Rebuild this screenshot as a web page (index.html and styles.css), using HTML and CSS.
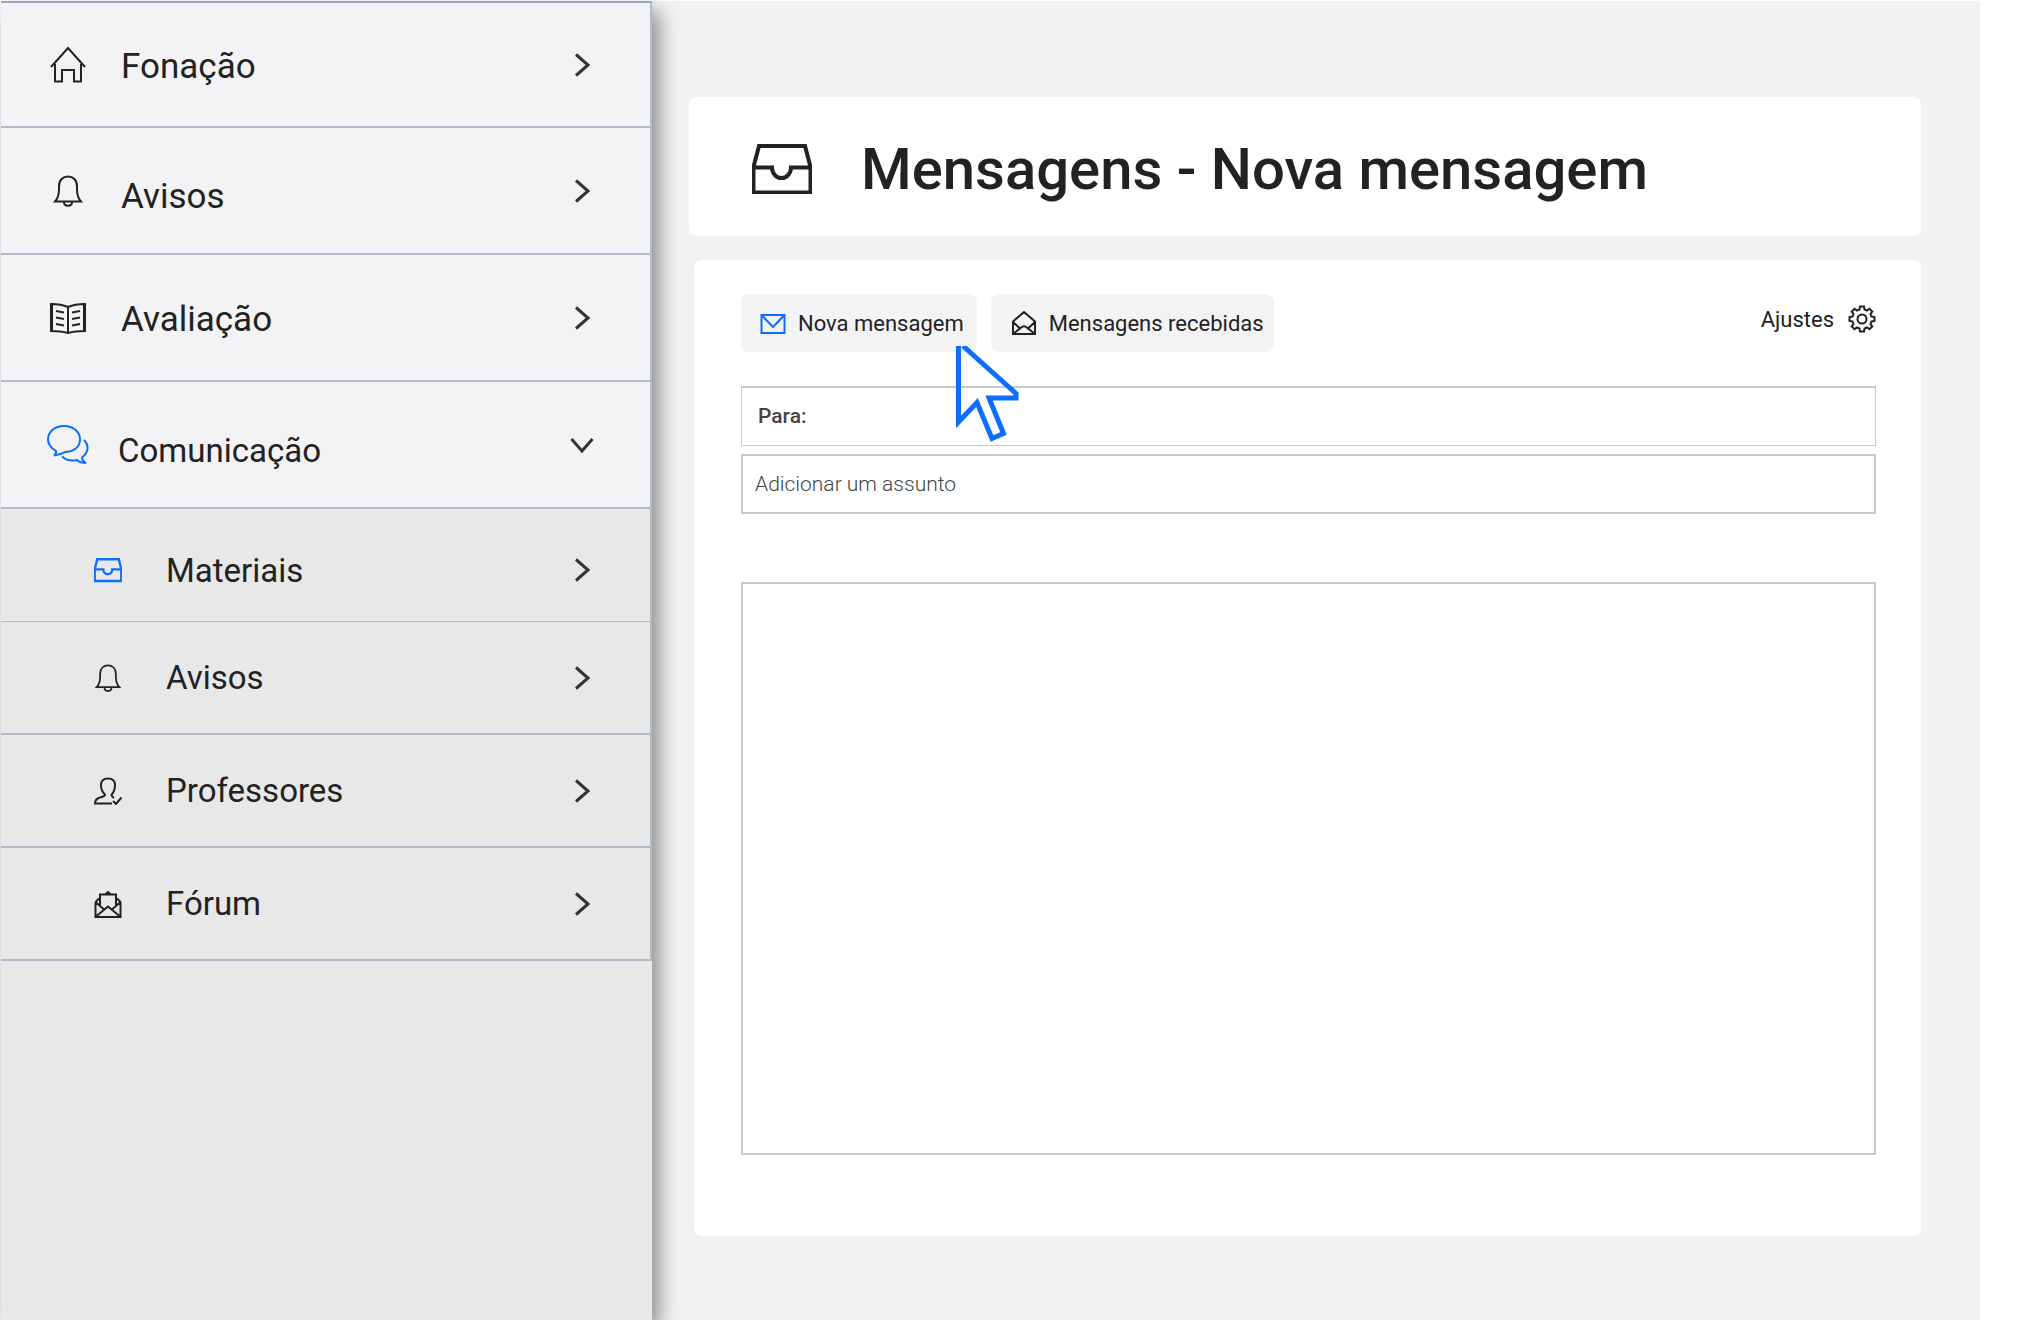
FILE: index.html
```html
<!DOCTYPE html>
<html lang="pt-BR">
<head>
<meta charset="utf-8">
<title>Mensagens - Nova mensagem</title>
<link rel="stylesheet" href="styles.css">
</head>
<body>
<svg width="0" height="0" class="sprite" aria-hidden="true">
  <symbol id="chevron" viewBox="0 0 24 24"><path d="M6 1.500L18 12L6 22.500"/></symbol>
  <symbol id="bell" viewBox="0 0 28 32"><path d="M1 26.500C4 23 5 20 5 15V11C5 5 9 1.500 14 1.500S23 5 23 11V15C23 20 24 23 27 26.500Z"/><path d="M10 27C10 32 18 32 18 27"/></symbol>
  <symbol id="tray" viewBox="0 0 60 50"><path d="M7 2H53L58.500 23V48.500H1.500V23Z"/><path d="M1.500 23.500H20C20 29 24 34 29.500 34S39 29 39 23.500H58.500"/></symbol>
</svg>

<nav class="sidebar" aria-label="Menu principal">
  <a class="nav-row" href="#fonacao">
    <svg class="nav-icon" viewBox="0 0 44 44"><path d="M5 24L22 5L39 24M9 21V38.500H16V27H28V38.500H35V21"/></svg>
    <span class="nav-text">Fonação</span>
    <svg class="chevron"><use href="#chevron"/></svg>
  </a>
  <a class="nav-row nav-row--low" href="#avisos">
    <svg class="nav-icon nav-icon--bell"><use href="#bell"/></svg>
    <span class="nav-text">Avisos</span>
    <svg class="chevron"><use href="#chevron"/></svg>
  </a>
  <a class="nav-row" href="#avaliacao">
    <svg class="nav-icon" viewBox="0 0 44 44"><path d="M5 8Q15 8 22 11Q29 8 39 8V35Q29 35 22 37Q15 35 5 35ZM22 11V37M10 15L18 16.500M10 21.500L18 23M10 28L18 29.500M34 15L26 16.500M34 21.500L26 23M34 28L26 29.500"/><path d="M6 8V35M38 8V35"/></svg>
    <span class="nav-text">Avaliação</span>
    <svg class="chevron"><use href="#chevron"/></svg>
  </a>
  <button class="nav-row nav-row--low nav-row--open" type="button" aria-expanded="true" aria-controls="submenu">
    <svg class="nav-icon nav-icon--blue" viewBox="0 0 44 44"><path d="M10 28C5 25 2 21 2 16.500C2 8.500 9 3 18 3S34 8.500 34 16.500S27 29 19 29Q15 31.500 8 32.500Q10.500 31 10 28Z"/><path d="M38 17C43 22 43 29 36 34.500Q36 38 40 40Q34 40 31 37C25 38.500 20 37 16 33.500"/></svg>
    <span class="nav-text">Comunicação</span>
    <svg class="chevron chevron--down"><use href="#chevron"/></svg>
  </button>
  <div class="submenu" id="submenu">
    <a class="sub-row sub-row--low" href="#materiais">
      <svg class="sub-icon nav-icon--blue sub-icon--tray"><use href="#tray"/></svg>
      <span>Materiais</span>
      <svg class="chevron"><use href="#chevron"/></svg>
    </a>
    <a class="sub-row" href="#sub-avisos">
      <svg class="sub-icon"><use href="#bell"/></svg>
      <span>Avisos</span>
      <svg class="chevron"><use href="#chevron"/></svg>
    </a>
    <a class="sub-row" href="#professores">
      <svg class="sub-icon" viewBox="0 0 28 28"><path d="M18 26.500H1Q1 22 6 20.500Q11 19.500 11 17.500C8 15 7 12 7 8C7 3.500 10 1.500 14 1.500S21 3.500 21 8C21 12 20 15 17.500 18Q18 20 20 21M19 24L22 27L27.500 20.500"/></svg>
      <span>Professores</span>
      <svg class="chevron"><use href="#chevron"/></svg>
    </a>
    <a class="sub-row" href="#forum">
      <svg class="sub-icon" viewBox="0 0 28 28"><path d="M1.500 12V27H26.500V12L22 7.500M1.500 12L6 7.500M6 15.500V4.500H22V15.500M11 4.500L14 2L17 4.500M1.500 12L10 19.500M26.500 12L18 19.500M2 26.500L14 16.500L26 26.500"/></svg>
      <span>Fórum</span>
      <svg class="chevron"><use href="#chevron"/></svg>
    </a>
  </div>
</nav>

<main class="content">
  <header class="title-card">
    <svg class="title-icon"><use href="#tray"/></svg>
    <h1>Mensagens - Nova mensagem</h1>
  </header>

  <form class="composer">
    <div class="toolbar">
      <button class="tab" type="button">
        <svg class="tab-icon nav-icon--blue" viewBox="0 0 26 24"><path d="M1.500 4H24.500V22H1.500ZM2 4.500L13 16L24 4.500"/></svg>
        Nova mensagem
        <svg class="pointer" viewBox="0 0 66 98" aria-hidden="true"><path d="M2.500 0V76L21 56.500L36 92.500L47.500 87.500L33 52H60V47.500L7 0"/></svg>
      </button>
      <button class="tab tab--inbox" type="button">
        <svg class="tab-icon" viewBox="0 0 26 24"><path d="M2 10.500L13 1L24 10.500V23H2ZM2 11L9 17.500M24 11L17 17.500M2.500 22.500L9 17.500Q13 13 17 17.500L23.500 22.500"/></svg>
        Mensagens recebidas
      </button>
      <button class="settings" type="button">
        Ajustes
        <svg class="gear" viewBox="0 0 28 28"><path d="M11.500 4.500L12 1.500H16L16.500 4.500L19 5.500L21.500 3.700L24.300 6.500L22.500 9L23.500 11.500L26.500 12V16L23.500 16.500L22.500 19L24.300 21.500L21.500 24.300L19 22.500L16.500 23.500L16 26.500H12L11.500 23.500L9 22.500L6.500 24.300L3.700 21.500L5.500 19L4.500 16.500L1.500 16V12L4.500 11.500L5.500 9L3.700 6.500L6.500 3.700L9 5.500Z"/><circle cx="14" cy="14" r="4.500"/></svg>
      </button>
    </div>
    <div class="field field--to">
      <label for="to">Para:</label>
      <input id="to" type="text">
    </div>
    <input class="field field--subject" type="text" placeholder="Adicionar um assunto" aria-label="Assunto">
    <textarea class="message" aria-label="Mensagem"></textarea>
  </form>
</main>
</body>
</html>
```

FILE: styles.css
```css
* {
  box-sizing: border-box;
}

body {
  margin: 0;
  padding: 1px 63px 0 1px;
  min-height: 100vh;
  display: flex;
  background: #fff;
  color: #222;
  font-family: Roboto, "Liberation Sans", sans-serif;
}

button,
input,
textarea {
  font: inherit;
  color: inherit;
}

svg {
  fill: none;
  stroke: currentColor;
  stroke-width: 2;
  flex: none;
}

.sprite {
  position: absolute;
}

/* Sidebar */

.sidebar {
  position: relative;
  z-index: 1;
  flex: 0 0 651px;
  background: #e8e8e8;
  box-shadow: 6px 10px 20px rgba(0, 0, 0, 0.45);
}

.nav-row,
.sub-row {
  display: flex;
  align-items: center;
  width: 100%;
  border: 0 solid #b0bccb;
  border-right-width: 2px;
  border-bottom-width: 2px;
  color: inherit;
  text-align: left;
  text-decoration: none;
}

.nav-row {
  height: 127px;
  padding: 0 56px 0 45px;
  gap: 31px;
  background: #f3f3f5;
  font-size: 35px;
}

.nav-row:first-child {
  border-top: 2px solid #9aaabc;
}

.nav-row--open {
  gap: 28px;
  font-size: 33px;
}

.nav-text {
  padding-top: 4px;
}

.nav-row--low .nav-text {
  padding-top: 12px;
}

.nav-icon {
  width: 44px;
  height: 44px;
}

.nav-icon--bell {
  height: 32px;
}

.nav-icon--blue {
  color: #0d6efd;
}

.chevron {
  width: 24px;
  height: 24px;
  margin-left: auto;
  color: #333;
  stroke-width: 3;
}

.chevron--down {
  transform: rotate(90deg);
}

.sub-row {
  height: 113px;
  padding: 0 56px 0 93px;
  gap: 44px;
  border-bottom-width: 1px;
  font-size: 33px;
}

.sub-row + .sub-row {
  border-bottom-width: 2px;
}

.sub-row--low {
  padding-top: 10px;
}

.sub-icon {
  width: 28px;
  height: 28px;
}

.sub-icon--tray {
  stroke-width: 5;
}

/* Content */

.content {
  flex: 1;
  min-width: 0;
  padding: 96px 59px 83px 37px;
  background: #f2f2f2;
}

.title-card {
  display: flex;
  align-items: center;
  gap: 49px;
  margin-bottom: 24px;
  padding: 34px 62px 29px 63px;
  border-radius: 8px;
  background: #fff;
}

.title-icon {
  width: 60px;
  height: 50px;
  stroke-width: 4;
}

h1 {
  margin: 0;
  font-size: 58px;
  font-weight: 500;
  line-height: 76px;
}

.composer {
  display: flex;
  flex-direction: column;
  margin-left: 5px;
  padding: 34px 45px 81px 47px;
  border-radius: 8px;
  background: #fff;
}

.toolbar {
  display: flex;
  gap: 14px;
  margin-bottom: 34px;
  font-size: 22px;
}

.tab,
.settings {
  display: flex;
  align-items: center;
  border: 0;
  white-space: nowrap;
}

.tab {
  position: relative;
  height: 58px;
  padding: 0 13px 0 19px;
  gap: 12px;
  border-radius: 8px;
  background: #f3f3f5;
}

.tab--inbox {
  padding: 0 10px 0 20px;
}

.tab-icon {
  width: 26px;
  height: 24px;
}

.pointer {
  position: absolute;
  z-index: 1;
  top: 52px;
  left: 215px;
  width: 66px;
  height: 98px;
  color: #0d6efd;
  stroke-width: 5;
  pointer-events: none;
}

.settings {
  height: 50px;
  margin-left: auto;
  padding: 0;
  gap: 14px;
  background: none;
}

.gear {
  width: 28px;
  height: 28px;
}

.field,
.message {
  width: 100%;
  border: 2px solid #c0c9d4;
  background: transparent;
}

.field {
  height: 60px;
}

.field--to {
  display: flex;
  align-items: center;
  gap: 10px;
  margin-bottom: 8px;
  padding: 0 0 2px 16px;
  border-width: 2px 1px 1px;
  color: #444;
  font-size: 21px;
  font-weight: 500;
}

.field--to input {
  flex: 1;
  min-width: 0;
  border: 0;
  background: none;
}

.field--subject {
  margin-bottom: 68px;
  padding: 0 12px;
  font-size: 21px;
  font-weight: 300;
}

.field--subject::placeholder {
  color: #444;
  opacity: 1;
}

.message {
  display: block;
  height: 573px;
  padding: 12px;
  font-size: 22px;
  resize: none;
}
```
